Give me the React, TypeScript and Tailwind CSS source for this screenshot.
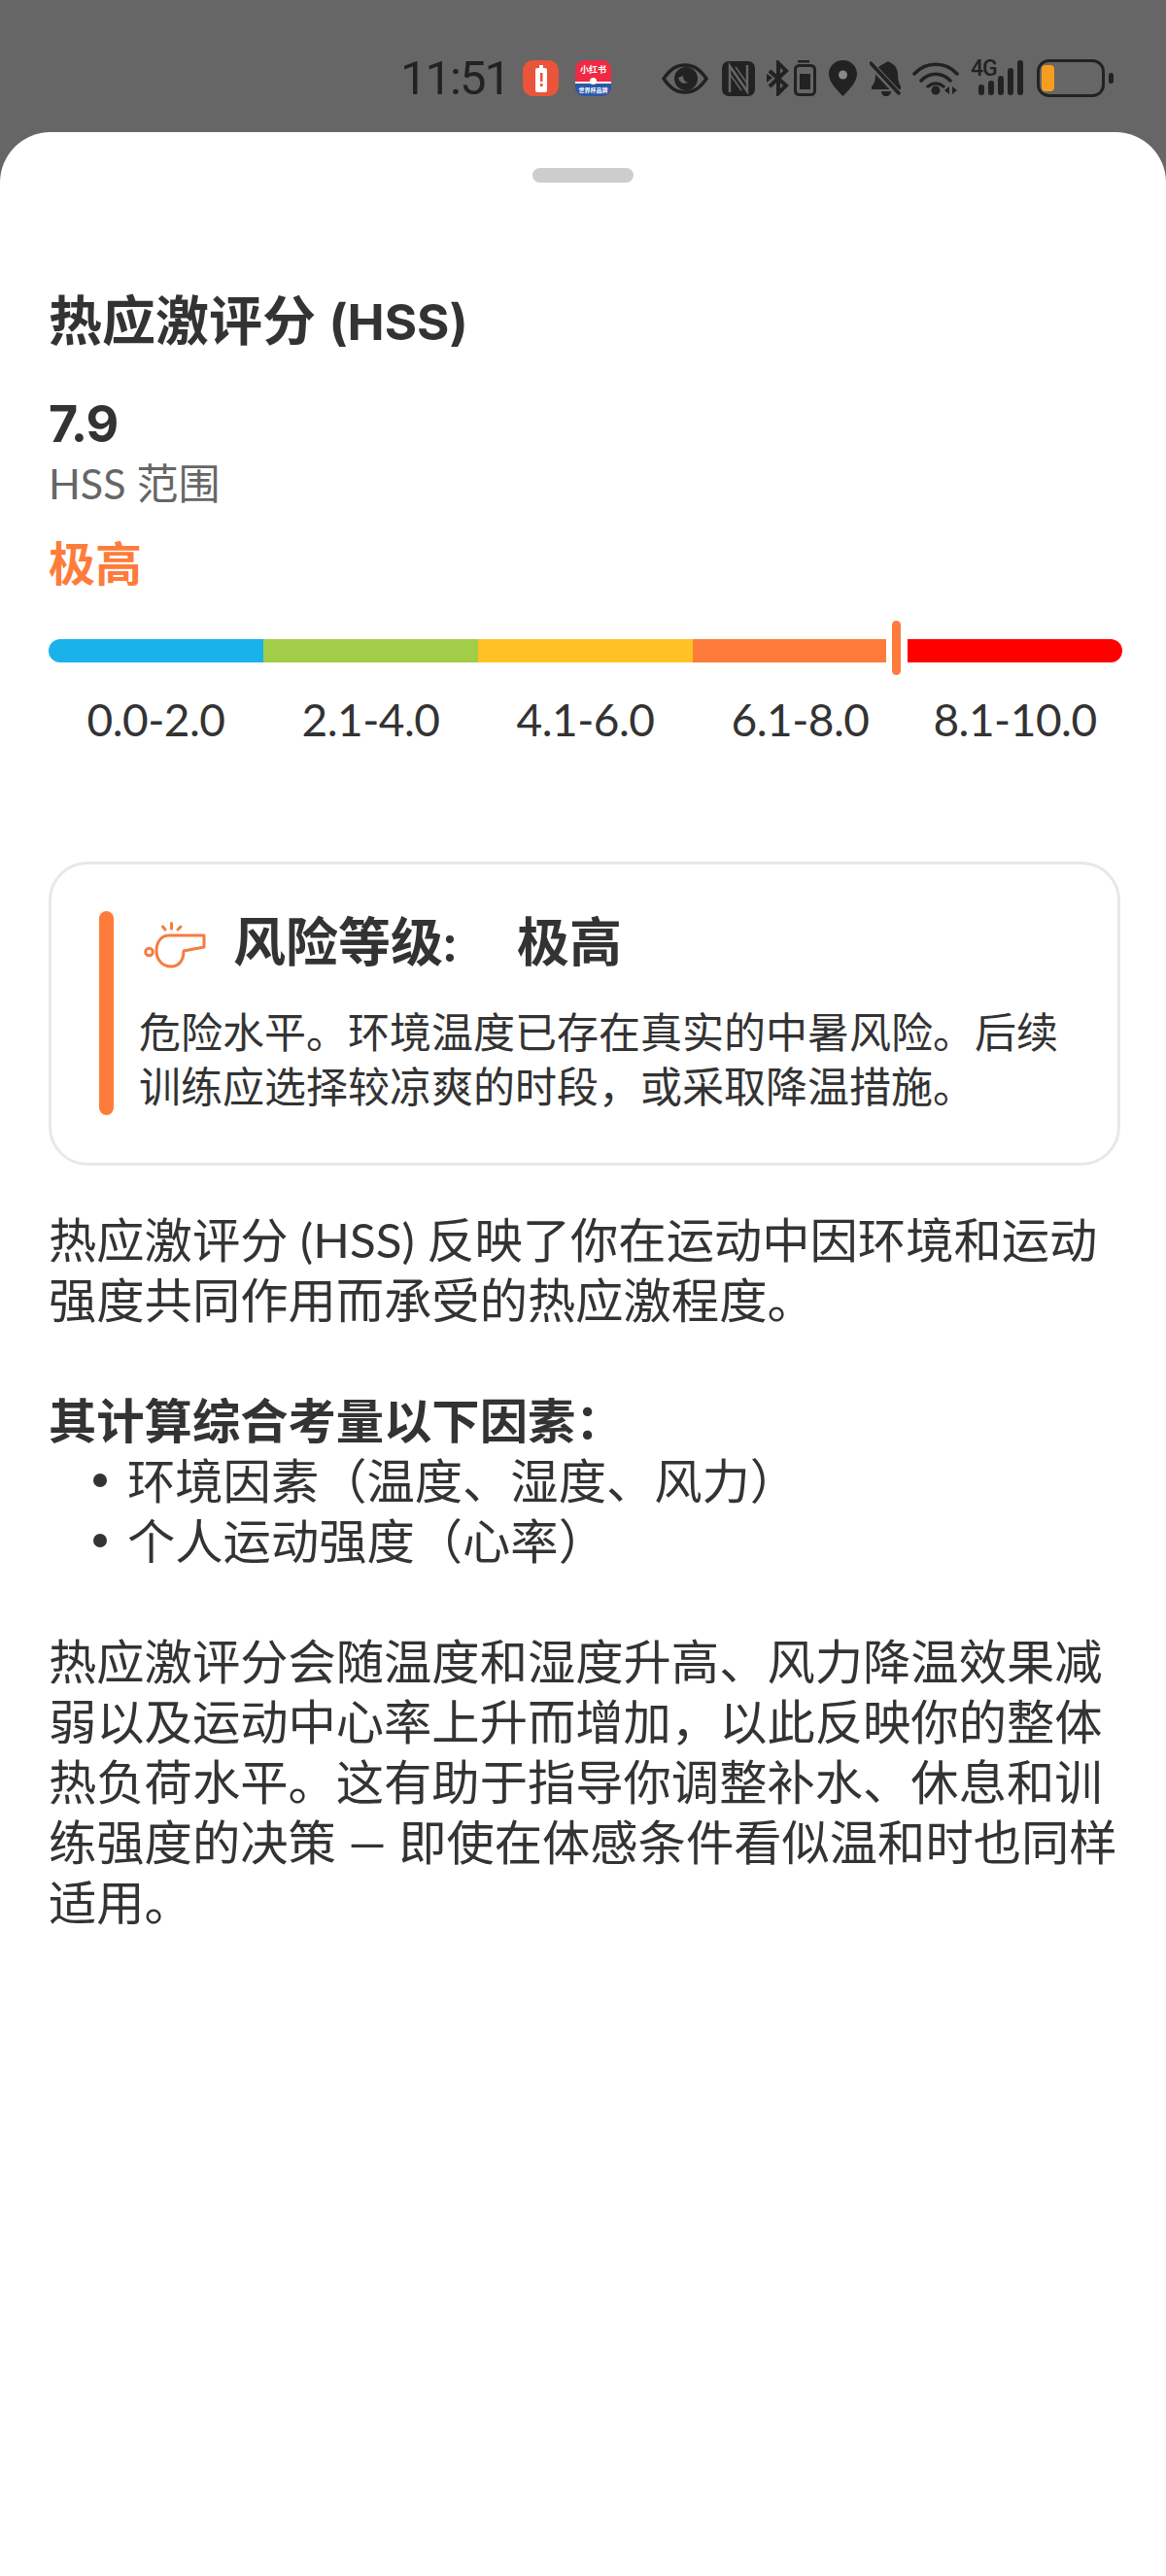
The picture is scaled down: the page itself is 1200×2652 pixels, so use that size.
import React from "react";

const FONT = "font-['Lato','Noto_Sans_CJK_SC',sans-serif]";

const segments = [
  { label: "0.0-2.0", color: "bg-[#1ab2ea]", extra: "rounded-l-full" },
  { label: "2.1-4.0", color: "bg-[#a2cd48]", extra: "" },
  { label: "4.1-6.0", color: "bg-[#fec224]", extra: "" },
  { label: "6.1-8.0", color: "bg-[#fe7c3b]", extra: "" },
  { label: "8.1-10.0", color: "bg-[#ff0000]", extra: "rounded-r-full" },
];

const StatusIcons: React.FC = () => (
  <div className="flex items-center text-[#222]">
    {/* eye */}
    <svg width="48" height="32" viewBox="0 0 48 32" className="ml-[52px]">
      <path d="M2 16C9 6 15 2 24 2s15 4 22 14c-7 10-13 14-22 14S9 26 2 16z" fill="none" stroke="#222" strokeWidth="3.5" />
      <circle cx="25" cy="16" r="12" fill="#222" />
      <path d="M17 15c1 5 6 7 10 5-3-1-5-3-5-7z" fill="#666" />
    </svg>
    {/* nfc */}
    <svg width="34" height="36" viewBox="0 0 34 36" className="ml-[14px]">
      <rect width="34" height="36" rx="7" fill="#222" />
      <path d="M8 32V5l18 26V4" fill="none" stroke="#666" strokeWidth="2.5" />
      <path d="M14 6l12 17M8 13l12 17" fill="none" stroke="#666" strokeWidth="1.5" />
    </svg>
    {/* bluetooth */}
    <svg width="23" height="37" viewBox="0 0 23 37" className="ml-[12px]">
      <path d="M3 11l17 15-8 8V3l8 8L3 27" fill="none" stroke="#222" strokeWidth="4" />
      <path d="M0 14l6 4-6 5z" fill="#222" />
    </svg>
    {/* battery saver */}
    <svg width="23" height="37" viewBox="0 0 23 37" className="ml-[5px]">
      <rect x="4" y="0" width="12" height="2.5" fill="#222" />
      <rect x="1.5" y="5.5" width="20" height="30" rx="4" fill="none" stroke="#222" strokeWidth="3" />
      <rect x="6" y="14" width="11" height="16" fill="#222" />
    </svg>
    {/* location */}
    <svg width="29" height="37" viewBox="0 0 29 37" className="ml-[13px]">
      <path d="M14.5 0C6.5 0 0 6 0 14c0 9 9 17 14.5 23C20 31 29 23 29 14 29 6 22.5 0 14.5 0z" fill="#222" />
      <circle cx="14.5" cy="15" r="4.5" fill="#888" />
    </svg>
    {/* silent */}
    <svg width="32" height="37" viewBox="0 0 32 37" className="ml-[13px]">
      <path d="M16 3c1-2 5-2 6 0 5 2 7 7 7 12 0 5 1 9 3 12v3H2v-3c3-3 4-7 4-12 0-5 4-10 10-12z" fill="#222" />
      <path d="M12 32h10c0 3-2 5-5 5s-5-2-5-5z" fill="#222" />
      <path d="M0 3l30 32" stroke="#666" strokeWidth="7" />
      <path d="M1 3l29 31" stroke="#222" strokeWidth="3.5" strokeLinecap="round" />
    </svg>
    {/* wifi */}
    <svg width="48" height="37" viewBox="0 0 48 37" className="ml-[12px]">
      <path d="M2 14C14 1 34 1 46 14M9 21c9-9 21-9 30 0M16 27c5-4 11-4 16 0" fill="none" stroke="#222" strokeWidth="3.5" strokeLinecap="round" />
      <circle cx="24" cy="31" r="4.5" fill="#222" />
      <path d="M38 27v8l-5-4zM41 27v8l5-4z" fill="#222" />
    </svg>
    {/* 4G signal */}
    <div className="relative ml-3 h-[37px] w-[54px]">
      <span className="absolute left-0 top-[-3px] font-['Roboto'] text-[23px] leading-[24px] font-medium tracking-[-1px]">4G</span>
      <svg width="54" height="37" viewBox="0 0 54 37" className="absolute left-0 top-0">
        <rect x="8" y="25" width="6" height="11" rx="3" fill="#222" />
        <rect x="18" y="21" width="6" height="15" rx="3" fill="#222" />
        <rect x="28" y="16" width="6" height="20" rx="3" fill="#222" />
        <rect x="38" y="8" width="6" height="28" rx="3" fill="#222" />
        <rect x="48" y="0" width="6" height="36" rx="3" fill="#222" />
      </svg>
    </div>
    {/* battery */}
    <svg width="79" height="39" viewBox="0 0 79 39" className="ml-[14px]">
      <rect x="1.5" y="1.5" width="67" height="36" rx="11" fill="none" stroke="#222" strokeWidth="3" />
      <rect x="5" y="6" width="13" height="27" rx="4" fill="#f59d1e" />
      <rect x="74" y="14" width="5" height="11" rx="2.5" fill="#222" />
    </svg>
  </div>
);

const StatusBar: React.FC = () => (
  <div className="flex h-[136px] items-center bg-[#666] pl-[412px] pt-[25px]">
    <span className="w-[126px] font-['Roboto'] text-[49px] leading-none font-normal tracking-[-2px] text-[#222]">11:51</span>
    <div className="flex h-[37px] w-[37px] items-center justify-center rounded-[10px] bg-[#e9543a]">
      <svg width="12" height="28" viewBox="0 0 12 28">
        <rect x="4" y="0" width="4" height="3" fill="#fff" />
        <rect x="0" y="3" width="12" height="25" rx="2" fill="#fff" />
        <rect x="5" y="8" width="2.5" height="9" fill="#e9543a" />
        <rect x="5" y="19" width="2.5" height="3" fill="#e9543a" />
      </svg>
    </div>
    <div className="relative ml-[17px] flex h-[37px] w-[37px] flex-col overflow-hidden rounded-[9px] bg-[#ee2a45]">
      <span className="h-[22px] text-center font-['Noto_Sans_CJK_SC'] text-[9px] leading-[20px] font-bold whitespace-nowrap text-white">小红书</span>
      <span className="h-[2px] bg-white" />
      <span className="h-[13px] bg-[#2a58a8] text-center font-['Noto_Sans_CJK_SC'] text-[6px] leading-[13px] font-bold whitespace-nowrap text-white">世界杯品牌</span>
      <span className="absolute left-[15px] top-[18px] h-[7px] w-[7px] rounded-full bg-white" />
    </div>
    <StatusIcons />
  </div>
);

const Whistle: React.FC = () => (
  <svg width="64" height="52" viewBox="18 18 64 52" fill="none" stroke="#f57c40" strokeWidth="3" strokeLinecap="round" strokeLinejoin="round">
    <path d="M37.5 25l2.5 3M46.5 21.500v5.500M56 25l-3 3" />
    <path d="M80 34H44c-9 0-13 8-13 16 0 10 7 16 15 16s13-6 13-16l21-4z" />
    <circle cx="23.500" cy="51" r="3.800" />
  </svg>
);

const App: React.FC = () => {
  return (
    <div className={`min-h-[2652px] w-[1200px] bg-[#666] ${FONT}`}>
      <StatusBar />
      <div className="h-[2516px] rounded-t-[52px] bg-white px-[50px] pt-[37px] text-[#333]">
        <div className="mx-auto h-[15px] w-[104px] rounded-full bg-[#cdcdcf]" />

        <h1 className="mt-[106px] text-[55px] leading-[70px] font-bold">
          热应激评分 <span className="font-['Inter'] text-[51px]">(HSS)</span>
        </h1>
        <p className="mt-[37px] font-['Inter'] text-[52px] leading-[66px] font-bold tracking-[-1px]">7.9</p>
        <p className="mt-[2px] text-[43px] leading-[52px] text-[#666]">HSS 范围</p>
        <p className="mt-[24px] text-[48px] leading-[64px] font-bold text-[#fe7c3b]">极高</p>

        <div className="relative mt-[46px] w-[1105px]">
          <div className="flex h-[24px] w-full">
            {segments.map((s) => (
              <div key={s.label} className={`h-full w-[221px] ${s.color} ${s.extra}`} />
            ))}
          </div>
          <span className="absolute left-[862px] top-[-19px] h-[56px] w-[22px] bg-white" />
          <span className="absolute left-[868px] top-[-19px] h-[56px] w-[9px] rounded-full bg-[#fe7c3b]" />
          <div className="mt-[31px] flex w-full">
            {segments.map((s) => (
              <div key={s.label} className="w-[221px] text-center text-[46px] leading-[56px] tracking-[-0.5px]">
                {s.label}
              </div>
            ))}
          </div>
        </div>

        <div className="mt-[118px] h-[313px] w-[1103px] rounded-[40px] border-[3px] border-[#e8e8e8] pt-[48px] pl-[49px]">
          <div className="flex h-[210px]">
            <div className="h-full w-[15px] rounded-full bg-[#fe7c3b]" />
            <div className="ml-[26px] whitespace-nowrap">
              <div className="flex items-center">
                <span className="ml-[5px] mt-[6px]">
                  <Whistle />
                </span>
                <span className="ml-[28px] w-[292px] text-[54px] leading-[64px] font-bold">风险等级:</span>
                <span className="text-[54px] leading-[64px] font-bold">极高</span>
              </div>
              <p className="mt-[33px] text-[43px] leading-[56px]">
                危险水平。环境温度已存在真实的中暑风险。后续
                <br />
                训练应选择较凉爽的时段，或采取降温措施。
              </p>
            </div>
          </div>
        </div>

        <div className="mt-[45px] text-[49.300px] leading-[62px] whitespace-nowrap">
          <p>
            热应激评分 (HSS) 反映了你在运动中因环境和运动
            <br />
            强度共同作用而承受的热应激程度。
          </p>
          <p className="mt-[62px] font-bold">其计算综合考量以下因素：</p>
          <ul>
            <li className="flex items-center">
              <span className="ml-[46px] h-[14px] w-[14px] rounded-full bg-[#333]" />
              <span className="ml-[21px]">环境因素（温度、湿度、风力）</span>
            </li>
            <li className="flex items-center">
              <span className="ml-[46px] h-[14px] w-[14px] rounded-full bg-[#333]" />
              <span className="ml-[21px]">个人运动强度（心率）</span>
            </li>
          </ul>
          <p className="mt-[62px]">
            热应激评分会随温度和湿度升高、风力降温效果减
            <br />
            弱以及运动中心率上升而增加，以此反映你的整体
            <br />
            热负荷水平。这有助于指导你调整补水、休息和训
            <br />
            练强度的决策 — 即使在体感条件看似温和时也同样
            <br />
            适用。
          </p>
        </div>
      </div>
    </div>
  );
};

export default App;
